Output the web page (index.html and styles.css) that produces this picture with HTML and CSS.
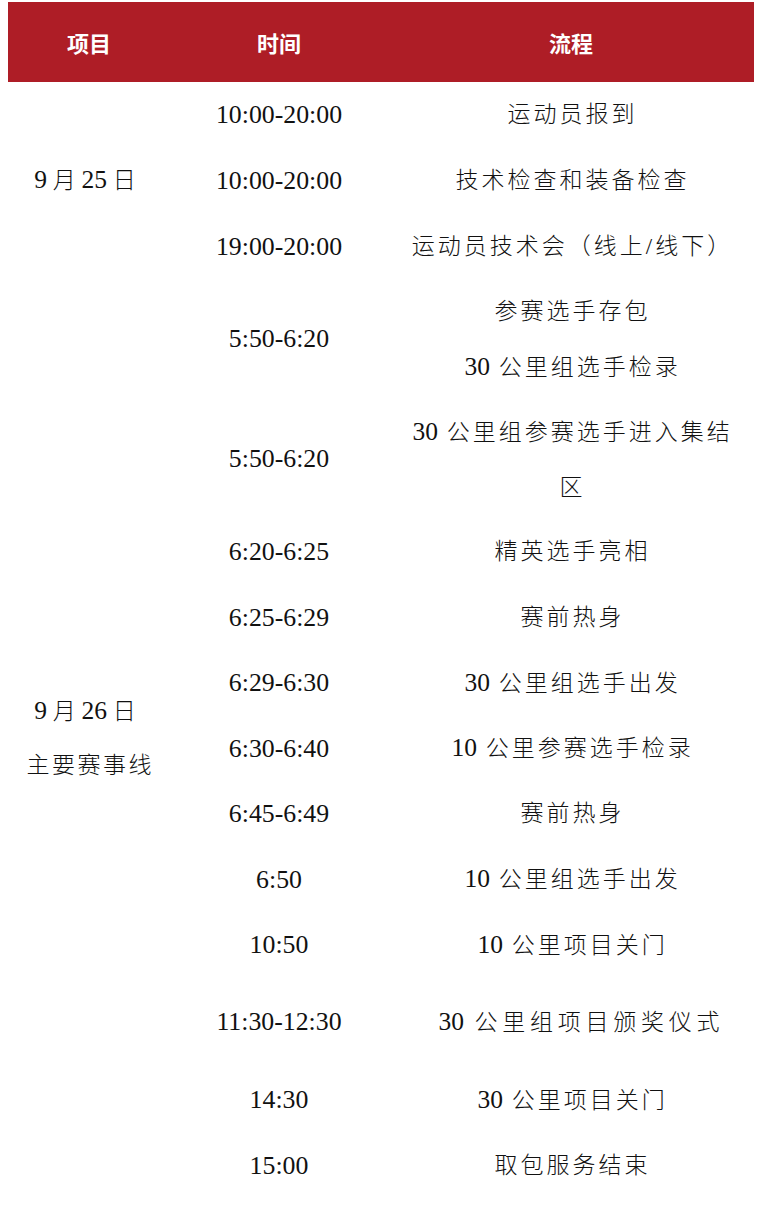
FILE: index.html
```html
<!DOCTYPE html>
<html lang="zh-CN">
<head>
<meta charset="utf-8">
<title>赛事流程</title>
<link rel="stylesheet" href="styles.css">
</head>
<body>
<div class="wrap">
<table class="schedule">
  <colgroup>
    <col class="c1"><col class="c2"><col class="c3">
  </colgroup>
  <thead>
    <tr class="head">
      <th>项目</th><th>时间</th><th>流程</th>
    </tr>
  </thead>
  <tbody>
    <tr class="h66">
      <td class="item" rowspan="3"><span class="date"><span class="num">9</span> 月 <span class="num">25</span> 日</span></td>
      <td class="time">10:00-20:00</td>
      <td class="proc">运动员报到</td>
    </tr>
    <tr class="h66">
      <td class="time">10:00-20:00</td>
      <td class="proc">技术检查和装备检查</td>
    </tr>
    <tr class="h65">
      <td class="time">19:00-20:00</td>
      <td class="proc">运动员技术会（线上/线下）</td>
    </tr>
    <tr class="h120">
      <td class="item item2" rowspan="14"><span class="date"><span class="num">9</span> 月 <span class="num">26</span> 日</span><br><span class="spaced">主要赛事线</span></td>
      <td class="time">5:50-6:20</td>
      <td class="proc multi">参赛选手存包<br><span class="num">30</span> 公里组选手检录</td>
    </tr>
    <tr class="h120">
      <td class="time">5:50-6:20</td>
      <td class="proc multi"><span class="num">30</span> 公里组参赛选手进入集结<br>区</td>
    </tr>
    <tr class="h66">
      <td class="time">6:20-6:25</td>
      <td class="proc">精英选手亮相</td>
    </tr>
    <tr class="h65">
      <td class="time">6:25-6:29</td>
      <td class="proc">赛前热身</td>
    </tr>
    <tr class="h66">
      <td class="time">6:29-6:30</td>
      <td class="proc"><span class="num">30</span> 公里组选手出发</td>
    </tr>
    <tr class="h65">
      <td class="time">6:30-6:40</td>
      <td class="proc"><span class="num">10</span> 公里参赛选手检录</td>
    </tr>
    <tr class="h66">
      <td class="time">6:45-6:49</td>
      <td class="proc">赛前热身</td>
    </tr>
    <tr class="h65">
      <td class="time">6:50</td>
      <td class="proc"><span class="num">10</span> 公里组选手出发</td>
    </tr>
    <tr class="h66">
      <td class="time">10:50</td>
      <td class="proc"><span class="num">10</span> 公里项目关门</td>
    </tr>
    <tr class="h88">
      <td class="time">11:30-12:30</td>
      <td class="proc wide"><span class="num">30</span> 公里组项目颁奖仪式</td>
    </tr>
    <tr class="h68">
      <td class="time">14:30</td>
      <td class="proc"><span class="num">30</span> 公里项目关门</td>
    </tr>
    <tr class="h64">
      <td class="time">15:00</td>
      <td class="proc">取包服务结束</td>
    </tr>
  </tbody>
</table>
</div>
</body>
</html>
```
FILE: styles.css
```css
html, body {
  margin: 0;
  padding: 0;
  background: #ffffff;
}

.wrap {
  padding: 2px 6px 0 8px;
}

.schedule {
  width: 746px;
  border-collapse: collapse;
  border-spacing: 0;
  table-layout: fixed;
  color: #111111;
}

.c1 { width: 162px; }
.c2 { width: 218px; }
.c3 { width: 366px; }

.head {
  height: 80px;
  background: #ae1d26;
}

.head th {
  padding: 0;
  color: #ffffff;
  font-family: "Noto Sans CJK SC", "Noto Sans", sans-serif;
  font-weight: 700;
  font-size: 22px;
  text-align: center;
  vertical-align: middle;
}

.schedule td {
  padding: 0;
  text-align: center;
  vertical-align: middle;
  white-space: nowrap;
  font-family: "Liberation Serif", "Noto Sans CJK SC", serif;
  font-weight: 300;
  font-size: 23px;
}

.num {
  font-family: "Liberation Serif", serif;
  font-size: 25.5px;
  letter-spacing: 0;
}

.h64 { height: 64px; }
.h65 { height: 65px; }
.h66 { height: 66px; }
.h68 { height: 68px; }
.h88 { height: 88px; }
.h120 { height: 120px; }

.item {
  line-height: 30px;
}

.item2 {
  line-height: 54px;
}

.date {
  padding-right: 8px;
}

.spaced {
  letter-spacing: 2.5px;
  padding-left: 2.5px;
}

.schedule td.time {
  line-height: 30px;
  font-size: 25.8px;
}

.schedule td.proc {
  line-height: 30px;
  letter-spacing: 3px;
  padding-left: 3px;
}

.schedule td.proc.multi {
  line-height: 55px;
}

.schedule td.proc.wide {
  letter-spacing: 4.75px;
  padding-left: 20.75px;
}
```
